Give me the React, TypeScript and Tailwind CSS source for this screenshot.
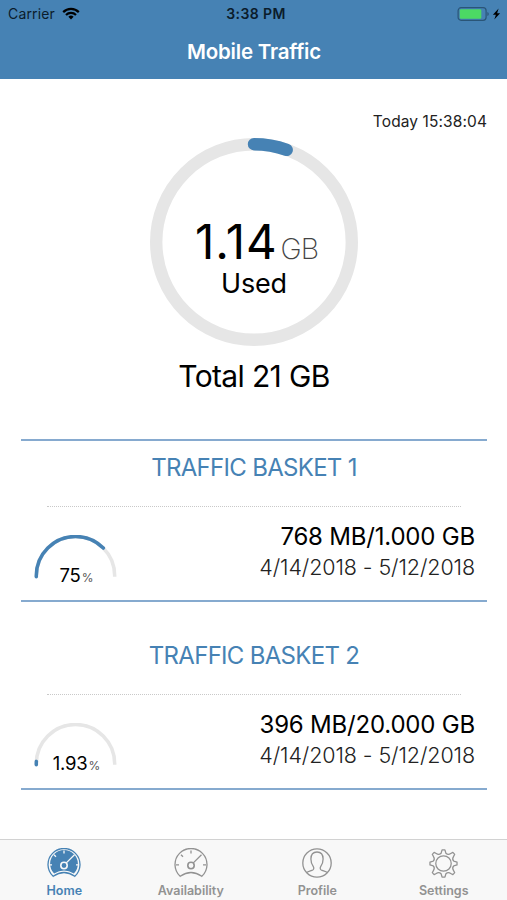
import { ReactNode } from "react";

const baskets = [
  {
    name: "TRAFFIC BASKET 1",
    amount: "768 MB/1.000 GB",
    period: "4/14/2018 - 5/12/2018",
    percent: 75,
  },
  {
    name: "TRAFFIC BASKET 2",
    amount: "396 MB/20.000 GB",
    period: "4/14/2018 - 5/12/2018",
    percent: 1.93,
  },
];

function StatusBar() {
  return (
    <div className="flex h-7 items-center text-[#0b1c2b]">
      <div className="flex flex-1 items-center gap-[7px] pl-2">
        <span className="-mt-0.5 text-[14px] tracking-[0.15px]">Carrier</span>
        <svg className="-mt-0.5" width="18" height="13" viewBox="0 0 18 13" fill="none" stroke="#000" strokeWidth="2.2">
          <path d="M1.2 5.1a11 11 0 0 1 15.6 0" />
          <path d="M4 8a7.1 7.1 0 0 1 10 0" />
          <path d="M9 12.4 6.4 9.8a3.7 3.7 0 0 1 5.2 0z" fill="#000" stroke="none" />
        </svg>
      </div>
      <span className="-mt-0.5 pl-0.5 text-[14px] font-semibold tracking-[0.4px]">3:38 PM</span>
      <div className="flex flex-1 items-center justify-end pr-[5px]">
        <svg className="-mt-px" width="45" height="14" viewBox="0 0 45 14">
          <rect x="1.1" y="0.7" width="28" height="12.6" rx="3" fill="none" stroke="#2a5577" strokeWidth="1.2" />
          <rect x="2.8" y="2.3" width="21.5" height="9.4" rx="1.2" fill="#4cd964" />
          <path d="M30.4 4.9a2.3 2.3 0 0 1 0 4.2z" fill="#2a5577" />
          <path d="m41.6 1.5-5.7 6.2h3l-1.6 4.8 5.8-6.3h-3z" fill="#000" />
        </svg>
      </div>
    </div>
  );
}

function UsageRing() {
  const r = 97.8;
  const length = 2 * Math.PI * r;
  return (
    <div className="relative mx-auto h-[208px] w-[208px]">
      <svg width="208" height="208" viewBox="0 0 208 208" fill="none" strokeWidth="12.4">
        <circle cx="104" cy="104" r={r} stroke="#e6e6e6" />
        <circle
          cx="104"
          cy="104"
          r={r}
          stroke="#4682b4"
          strokeLinecap="round"
          strokeDasharray={`${(length * 1.14) / 21} ${length}`}
          transform="rotate(-90 104 104)"
        />
      </svg>
      <div className="absolute inset-0 flex flex-col items-center pt-[84px] text-black">
        <div className="flex h-12 items-baseline gap-[3px] pl-[5px] leading-10">
          <span className="text-[47.5px] tracking-[0.9px]">1.14</span>
          <span className="text-[28.5px] leading-8 font-extralight tracking-[-1px] text-[#444]">GB</span>
        </div>
        <span className="text-[27px] leading-7 tracking-[-0.2px]">Used</span>
      </div>
    </div>
  );
}

function Gauge({ percent }: { percent: number }) {
  const r = 39.2;
  const half = Math.PI * r;
  const arc = "M2.3 41.7v-1a39.2 39.2 0 0 1 78.4 0v1";
  return (
    <div className="relative h-[52px] w-[83px]">
      <svg width="83" height="44" viewBox="0 0 83 44" fill="none" strokeWidth="3.5">
        <path d={arc} stroke="#e6e6e6" />
        <path
          d={arc}
          stroke="#4682b4"
          strokeLinecap="round"
          strokeDasharray={`${(half * percent) / 100 + 1} ${half + 4}`}
        />
      </svg>
      <div className="absolute inset-x-0 bottom-[-1px] flex items-baseline justify-center gap-px pl-0.5 leading-5">
        <span className="text-[18.5px] tracking-[-0.2px] text-black">{percent}</span>
        <span className="text-[12px] text-[#555]">%</span>
      </div>
    </div>
  );
}

function Basket({ basket, first }: { basket: (typeof baskets)[0]; first: boolean }) {
  return (
    <section
      className={
        first
          ? "h-[163px] border-y-2 border-[#86aacf]"
          : "h-[188px] border-b-2 border-[#86aacf] pt-[27px]"
      }>
      <h2 className="h-[65px] pt-[11px] text-center text-[24px] leading-8 tracking-[-0.7px] text-[#4682b4]">
        {basket.name}
      </h2>
      <div className="mx-[26px] border-t border-dotted border-[#c9c9c9]" />
      <div className="flex justify-between pr-3 pl-[13px]">
        <div className="pt-7">
          <Gauge percent={basket.percent} />
        </div>
        <div className="pt-[14px] text-right">
          <p className="text-[24px] leading-8 tracking-[-0.2px] text-black">{basket.amount}</p>
          <p className="text-[21.5px] leading-7 font-light tracking-[-0.1px] text-[#222]">{basket.period}</p>
        </div>
      </div>
    </section>
  );
}

function GaugeIcon({ filled }: { filled?: boolean }) {
  return (
    <svg width="34" height="30" viewBox="0 0 34 30" fill="none" stroke="currentColor" strokeWidth="1.3">
      <path d="M6.2 28.3A16 16 0 1 1 27.8 28.3Q17 20.7 6.2 28.3z" />
      {filled && (
        <path d="M7.1 25.6A13.9 13.9 0 1 1 26.9 25.6Q17 19.5 7.1 25.6z" fill="currentColor" stroke="none" />
      )}
      <g stroke={filled ? "#f8f8f8" : "currentColor"}>
        <path d="M17 2.5v3M7 6.8l2 2M2 16.9h3M29 16.9h3M27.5 6.8l-8.2 8.1" />
        <circle cx="17" cy="17.5" r="3.2" strokeWidth="1.6" />
      </g>
    </svg>
  );
}

function ProfileIcon() {
  return (
    <svg width="30" height="30" viewBox="0 0 30 30" fill="none" stroke="currentColor" strokeWidth="1.3">
      <circle cx="15" cy="15" r="14.2" />
      <path d="M4.6 24.6c1.4-1.4 4.4-1.7 6.2-2.6 1.3-.7 1.2-2.5.4-3.7-1.5-2-2.3-4.2-2.3-7.2 0-4.4 2.3-7.1 6.1-7.1s6.1 2.7 6.1 7.1c0 3-.8 5.2-2.3 7.2-.8 1.2-.9 3 .4 3.7 1.8.9 4.8 1.2 6.2 2.6" />
    </svg>
  );
}

function SettingsIcon() {
  return (
    <svg width="29" height="29" viewBox="0 0 30 30" fill="none" stroke="currentColor" strokeWidth="1.3" strokeLinejoin="round">
      <circle cx="15" cy="15" r="8" />
      <path d="M13.5 1h3l1 3.4q2.3 2.2 5 .3l2.2-1.2 1.9 2-1.3 2.4q-1.7 2.8.3 4.6l3.4 1v3l-3.4 1q-2 1.8-.3 4.6l1.3 2.4-1.9 2-2.2-1.2q-2.7-1.9-5 .3l-1 3.4h-3l-1-3.4q-2.3-2.2-5-.3l-2.2 1.2-1.9-2 1.3-2.4q1.7-2.8-.3-4.6l-3.4-1v-3l3.4-1q2-1.8.3-4.6l-1.3-2.4 1.9-2 2.2 1.2q2.7 1.9 5-.3z" />
    </svg>
  );
}

function Tab({ label, active, children }: { label: string; active?: boolean; children: ReactNode }) {
  return (
    <div className={active ? "flex flex-1 flex-col items-center text-[#4682b4]" : "flex flex-1 flex-col items-center text-[#929292]"}>
      <div className="flex h-[38px] items-end">{children}</div>
      <span className="mt-[3px] text-[12.5px] leading-[19px] font-semibold">{label}</span>
    </div>
  );
}

export default function App() {
  return (
    <div className="flex h-[900px] w-[507px] flex-col overflow-hidden bg-white font-['Inter',sans-serif]">
      <header className="h-[79px] bg-[#4682b4]">
        <StatusBar />
        <h1 className="pl-px text-center text-[20.5px] leading-12 font-semibold tracking-[-0.2px] text-white">Mobile Traffic</h1>
      </header>
      <main className="flex-1 pr-5 pl-[21px]">
        <p className="pt-[33px] text-right text-[15.5px] leading-5 tracking-[0.1px] text-[#222]">Today 15:38:04</p>
        <div className="pt-1.5">
          <UsageRing />
        </div>
        <p className="pt-3 text-center text-[30px] leading-9 tracking-[-0.65px] text-black">Total 21 GB</p>
        <div className="mt-[45px]">
          {baskets.map((basket, index) => (
            <Basket key={basket.name} basket={basket} first={index === 0} />
          ))}
        </div>
      </main>
      <nav className="flex h-[61px] border-t border-[#d2d2d2] bg-[#f8f8f8] pl-px">
        <Tab label="Home" active>
          <GaugeIcon filled />
        </Tab>
        <Tab label="Availability">
          <GaugeIcon />
        </Tab>
        <Tab label="Profile">
          <ProfileIcon />
        </Tab>
        <Tab label="Settings">
          <SettingsIcon />
        </Tab>
      </nav>
    </div>
  );
}
